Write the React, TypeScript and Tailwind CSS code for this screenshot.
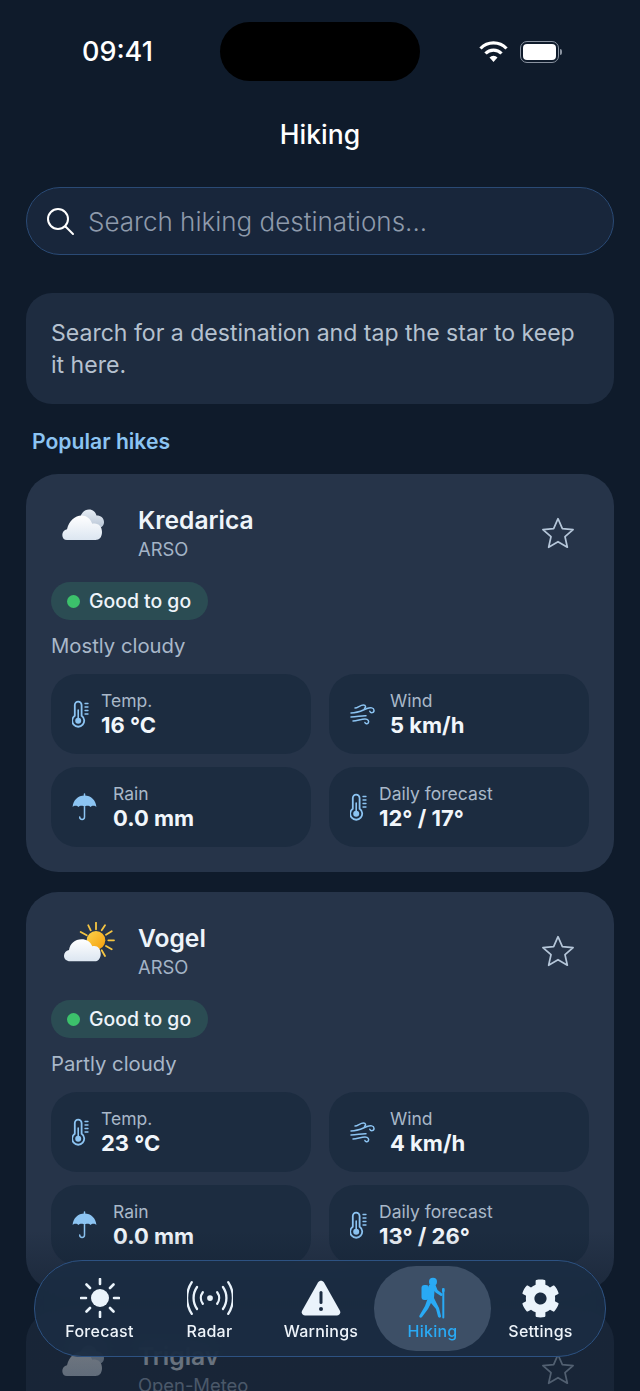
import { FaCog } from 'react-icons/fa';

type Metric = { icon: 'temp' | 'wind' | 'rain'; label: string; value: string };

function ThermoIcon() {
  return (
    <svg width="17" height="28" viewBox="0 0 17 28" fill="none" stroke="#8cc4f2" strokeWidth="1.800" strokeLinecap="round">
      <path d="M2.800 15.800V5a3.400 3.400 0 0 1 6.800 0v10.800a6 6 0 1 1-6.800 0Z" />
      <circle cx="6.200" cy="20.700" r="3" fill="#8cc4f2" stroke="none" />
      <path d="M6.200 20V10" strokeWidth="1.600" />
      <path d="M13 3.500h3M13 7h3M13 10.500h3M13 14h3" strokeWidth="1.300" />
    </svg>
  );
}

function WindIcon() {
  return (
    <svg width="26" height="22" viewBox="0 0 26 22" fill="none" stroke="#8cc4f2" strokeWidth="1.500" strokeLinecap="round">
      <path d="M5 5C8 5 10 2 13.500 2c2.300 0 2.800 2.700 1 3.200" />
      <path d="M1 10C8 10 11 8 17 5.500c3.500-1.300 6.800-1 7 1.800.2 2.700-3.300 3.200-4.200 1" />
      <path d="M1 14c6 0 10-1.500 15-1.300" />
      <path d="M3 18c4 0 8-2 12-2 3.300 0 4.300 2.500 3.200 4-1 1.300-3 .8-3.300-.6" />
    </svg>
  );
}

function UmbrellaIcon() {
  return (
    <svg width="25" height="28" viewBox="0 0 25 28" fill="none">
      <path d="M12.500 1v2" stroke="#8cc4f2" strokeWidth="1.500" strokeLinecap="round" />
      <path d="M12.500 2.500C6 2.500 1.200 7 .6 14c1.300-1.500 4.500-1.700 5.800 0 1.300-1.600 4.800-1.700 6.100 0 1.300-1.700 4.800-1.600 6.100 0 1.300-1.700 4.500-1.500 5.800 0-.6-7-5.400-11.500-11.900-11.500Z" fill="#8cc4f2" />
      <path d="M12.500 14v10a2.400 2.400 0 0 1-4.800 0" stroke="#8cc4f2" strokeWidth="1.500" strokeLinecap="round" />
    </svg>
  );
}

function CloudsIcon({ id }: { id: string }) {
  return (
    <svg width="44" height="34" viewBox="0 0 44 34">
      <defs>
        <linearGradient id={`${id}Back`} x1="0" y1="0" x2="0" y2="1">
          <stop offset="0" stopColor="#e6edf5" />
          <stop offset="1" stopColor="#b9c6d6" />
        </linearGradient>
        <linearGradient id={`${id}Front`} x1="0" y1="0" x2="0" y2="1">
          <stop offset="0" stopColor="#ffffff" />
          <stop offset="1" stopColor="#dce6f1" />
        </linearGradient>
      </defs>
      <path d="M17 14C18 6 22 1.500 27 1.500c4 0 6.500 2.500 7.500 6 4.500 0 7.500 2.700 7.500 6.500 0 3.500-2 5.500-5 5.500H17Z" fill={`url(#${id}Back)`} />
      <path d="M5 32c-3 0-4.700-2-4.700-5 0-3 1.800-5 4.700-5.800C7 13 13 7.500 19.500 7.500c5 0 9 3 10.700 8.300 1-.2 1.500-.3 2.300-.3 4.500 0 7.500 3.500 7.500 8.500 0 5-2.500 8-6.500 8Z" fill={`url(#${id}Front)`} />
    </svg>
  );
}

function SunCloudIcon() {
  return (
    <svg width="54" height="42" viewBox="0 0 54 42">
      <defs>
        <linearGradient id="sunFill" x1="0" y1="0" x2="1" y2="1">
          <stop offset="0" stopColor="#fcd34d" />
          <stop offset="1" stopColor="#f59e0b" />
        </linearGradient>
        <linearGradient id="sunCloud" x1="0" y1="0" x2="0" y2="1">
          <stop offset="0" stopColor="#ffffff" />
          <stop offset="1" stopColor="#dce6f1" />
        </linearGradient>
      </defs>
      <g stroke="#f5c542" strokeWidth="1.800" strokeLinecap="round">
        <path d="M34 .7v6.600M26.300 3.300l2.400 5M18.700 10l6 3.300M43 3.300l-3.300 5M49.700 9.300 44 12.700M52 18.300h-5.700M49.700 27.300 44 24M43 34l-3.300-5.700" />
      </g>
      <circle cx="34" cy="18.300" r="9.300" fill="url(#sunFill)" />
      <path d="M8 39.300c-3.500 0-6-2.300-6-5.500 0-3 2-5.300 5-5.800C8 21.500 13 17.300 19.500 17.300c5 0 9 2.500 10.800 7 .7-.1 1.200-.2 2-.2 3.800 0 6.400 3.300 6.400 7.800 0 4.500-2.700 7.400-6 7.400Z" fill="url(#sunCloud)" />
    </svg>
  );
}

function StarIcon() {
  return (
    <svg className="ml-auto mt-[14px] mr-[14px]" width="34" height="34" viewBox="0 0 32 32" fill="none" stroke="#b5c6d9" strokeWidth="1.600" strokeLinejoin="round">
      <path d="M16 2.500l4.100 9.300 10.100 1-7.600 6.700 2.200 9.900-8.800-5.200-8.800 5.200 2.200-9.900-7.600-6.700 10.100-1Z" />
    </svg>
  );
}

function HikerIcon() {
  return (
    <svg width="30" height="42" viewBox="0 0 30 42" fill="#29aaf5">
      <circle cx="15" cy="4.700" r="4" />
      <rect x="3.500" y="8" width="7.500" height="15" rx="3" />
      <path d="M11 8c2-1.500 5-1.500 6.500 0l2 5 4.500 3.500c1.400 1.200 0 3.200-1.500 2.300l-5-3.300-1-1.500-.5 7 5 10 2 8c.4 1.800-2.500 2.300-3 .6L18 32l-5-6-3 6-6 8c-1.200 1.500-3.500.3-2.500-1.500L7 29l2.500-7Z" />
      <path d="M25.300 13v27.500" stroke="#29aaf5" strokeWidth="2" strokeLinecap="round" />
      <rect x="24" y="11" width="2.600" height="4" rx="1" />
    </svg>
  );
}

function MetricBox({ icon, label, value }: Metric) {
  return (
    <div className="h-[80px] rounded-[26px] bg-[#1c2c40] flex items-center pl-[21px]">
      {icon === 'temp' && <div className="shrink-0 mr-[12px] flex"><ThermoIcon /></div>}
      {icon === 'wind' && <div className="shrink-0 mr-[14px] flex"><WindIcon /></div>}
      {icon === 'rain' && <div className="shrink-0 mr-[16px] flex"><UmbrellaIcon /></div>}
      <div className="flex flex-col">
        <span className="text-[17.500px] leading-[22px] text-[#a9b8c9]">{label}</span>
        <span className="text-[22px] leading-[27px] font-bold text-[#f1f6fb]">{value}</span>
      </div>
    </div>
  );
}

function HikeCard({ name, source, summary, weather, metrics }: {
  name: string;
  source: string;
  summary?: string;
  weather: React.ReactNode;
  metrics: Metric[];
}) {
  return (
    <div className="rounded-[32px] bg-[#263449] px-[25px] pt-[28px] h-[398px] shrink-0">
      <div className="flex items-start h-[54px]">
        <div className="w-[87px] h-[46px] pl-[11px] flex items-center">{weather}</div>
        <div className="flex flex-col">
          <span className="text-[24.600px] leading-[35px] mt-[1px] font-semibold text-[#eef4fa]">{name}</span>
          <span className="text-[18.400px] leading-[22px] text-[#a3b3c6]">{source}</span>
        </div>
        <StarIcon />
      </div>
      {summary && (
        <>
          <div className="mt-[26px] inline-flex items-center h-[38px] rounded-full bg-[#2b4c53] pl-[16px] pr-[17px] gap-[9px]">
            <span className="w-[13px] h-[13px] rounded-full bg-[#3cc16b]" />
            <span className="text-[19.400px] leading-[40px] font-medium text-[#eef4fa]">Good to go</span>
          </div>
          <p className="mt-[11px] text-[20.300px] leading-[30px] text-[#a9b8c9]">{summary}</p>
          <div className="mt-[13px] grid grid-cols-2 gap-x-[18px] gap-y-[13px]">
            {metrics.map(m => <MetricBox key={m.label} {...m} />)}
          </div>
        </>
      )}
    </div>
  );
}

function TabItem({ label, active, width, children }: { label: string; active?: boolean; width: string; children: React.ReactNode }) {
  return (
    <div className={`${width} shrink-0 h-[85px] flex flex-col items-center justify-end pb-[10px] rounded-[42px] ${active ? 'bg-[#3d4f66]' : ''}`}>
      <div className="h-[46px] flex items-center justify-center">{children}</div>
      <span className={`text-[16px] leading-[20px] tracking-[0.25px] font-medium ${active ? 'text-[#29aaf5]' : 'text-[#eef4fa]'}`}>{label}</span>
    </div>
  );
}

export default function App() {
  return (
    <div className="relative w-[640px] h-[1391px] overflow-hidden bg-[#0f1b2b] [font-family:Inter,sans-serif]">
      {/* status bar */}
      <div className="h-[112px] relative">
        <span className="absolute left-[82px] top-[36px] text-[27px] leading-[32px] font-medium text-white">09:41</span>
        <div className="absolute left-[220px] top-[22px] w-[200px] h-[59px] rounded-[30px] bg-black" />
        <svg className="absolute left-[479px] top-[41px]" width="29" height="22" viewBox="0 0 29 22" fill="none" stroke="#fff" strokeWidth="3.200">
          <path d="M1.500 7.500a18 18 0 0 1 26 0" />
          <path d="M6.500 12.500a11 11 0 0 1 16 0" />
          <path d="M14.500 21l-4-4.500a5.500 5.500 0 0 1 8 0Z" fill="#fff" stroke="none" />
        </svg>
        <div className="absolute left-[520px] top-[41px] w-[39px] h-[22px] rounded-[7px] border-[1.500px] border-[#8a93a0] p-[2px]">
          <div className="w-full h-full rounded-[4px] bg-white" />
        </div>
        <div className="absolute left-[560px] top-[49px] w-[2px] h-[6px] rounded-r-sm bg-[#8a93a0]" />
      </div>

      <h1 className="text-center text-[26.500px] leading-[44px] font-medium text-white">Hiking</h1>

      <div className="px-[26px] mt-[31px] flex flex-col">
        <div className="h-[68px] rounded-[34px] bg-[#18263b] border border-[#2a4a75] flex items-center pl-[18px] gap-[13px]">
          <svg width="30" height="30" viewBox="0 0 30 30" fill="none" stroke="#fff" strokeWidth="2" strokeLinecap="round">
            <circle cx="13" cy="13" r="10" />
            <path d="M20.500 20.500 28 28" />
          </svg>
          <span className="text-[26px] font-light text-[#8e9aab]">Search hiking destinations...</span>
        </div>

        <div className="mt-[38px] h-[111px] rounded-[26px] bg-[#1e2c40] px-[25px] flex items-center">
          <p className="text-[23.060px] leading-[32px] text-[#b5c1cf]">Search for a destination and tap the star to keep it here.</p>
        </div>

        <h2 className="mt-[25px] ml-[6px] text-[21.150px] leading-[26px] font-semibold text-[#8cc4f2]">Popular hikes</h2>

        <div className="mt-[19px] flex flex-col gap-[20px]">
          <HikeCard
            name="Kredarica"
            source="ARSO"
            summary="Mostly cloudy"
            weather={<CloudsIcon id="kredarica" />}
            metrics={[
              { icon: 'temp', label: 'Temp.', value: '16 °C' },
              { icon: 'wind', label: 'Wind', value: '5 km/h' },
              { icon: 'rain', label: 'Rain', value: '0.0 mm' },
              { icon: 'temp', label: 'Daily forecast', value: '12° / 17°' },
            ]}
          />
          <HikeCard
            name="Vogel"
            source="ARSO"
            summary="Partly cloudy"
            weather={<SunCloudIcon />}
            metrics={[
              { icon: 'temp', label: 'Temp.', value: '23 °C' },
              { icon: 'wind', label: 'Wind', value: '4 km/h' },
              { icon: 'rain', label: 'Rain', value: '0.0 mm' },
              { icon: 'temp', label: 'Daily forecast', value: '13° / 26°' },
            ]}
          />
          <HikeCard
            name="Triglav"
            source="Open-Meteo"
            weather={<CloudsIcon id="triglav" />}
            metrics={[]}
          />
        </div>
      </div>

      {/* fade under the tab bar */}
      <div className="absolute left-0 right-0 bottom-0 h-[160px] bg-gradient-to-b from-[#0f1b2b]/0 via-[#0f1b2b]/60 to-[#0f1b2b]/60" />

      <div className="absolute left-[34px] top-[1260px] w-[572px] h-[97px] rounded-[48px] bg-[#1b2c42]/90 border border-[#2d5282] backdrop-blur-md flex items-center pl-[13px]">
        <TabItem label="Forecast" width="w-[103px]">
          <svg width="40" height="40" viewBox="0 0 40 40" fill="#eaf3fb" stroke="#eaf3fb" strokeWidth="2.600" strokeLinecap="round">
            <circle cx="20" cy="20" r="9" stroke="none" />
            <path d="M20 1v5M20 34v5M1 20h5M34 20h5M6.500 6.500l3.500 3.500M30 30l3.500 3.500M6.500 33.500 10 30M30 10l3.500-3.500" />
          </svg>
        </TabItem>
        <TabItem label="Radar" width="w-[117px]">
          <svg width="46" height="36" viewBox="0 0 48 36" fill="none" stroke="#eaf3fb" strokeWidth="2.400" strokeLinecap="round">
            <circle cx="24" cy="18" r="3" fill="#eaf3fb" stroke="none" />
            <path d="M16.500 12a10 10 0 0 0 0 12M31.500 12a10 10 0 0 1 0 12" />
            <path d="M10.500 6.500a20 20 0 0 0 0 23M37.500 6.500a20 20 0 0 1 0 23" />
            <path d="M5 1.500a30 30 0 0 0 0 33M43 1.500a30 30 0 0 1 0 33" />
          </svg>
        </TabItem>
        <TabItem label="Warnings" width="w-[106px]">
          <svg width="40" height="36" viewBox="0 0 40 36">
            <path d="M17 2.500c1.400-2.400 4.600-2.400 6 0l15.800 28c1.300 2.400-.3 5-3 5H4.200c-2.700 0-4.300-2.600-3-5Z" fill="#eaf3fb" />
            <rect x="18.500" y="11" width="3" height="13" rx="1.500" fill="#1b2c42" />
            <circle cx="20" cy="29" r="2" fill="#1b2c42" />
          </svg>
        </TabItem>
        <TabItem label="Hiking" width="w-[117px]" active>
          <HikerIcon />
        </TabItem>
        <TabItem label="Settings" width="w-[99px]">
          <FaCog size={39} color="#eaf3fb" />
        </TabItem>
      </div>
    </div>
  );
}
